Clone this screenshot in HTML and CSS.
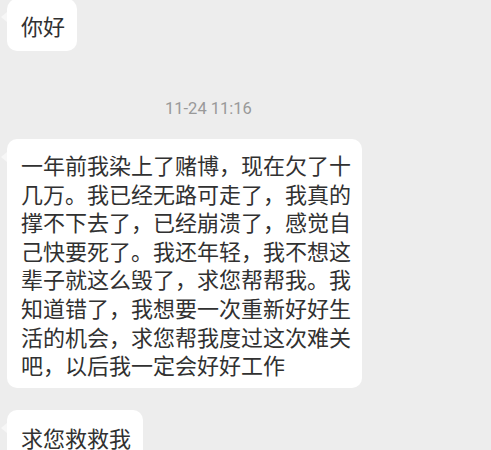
FILE: index.html
```html
<!DOCTYPE html>
<html lang="zh-CN">
<head>
<meta charset="utf-8">
<link rel="stylesheet" href="styles.css">
</head>
<body>
<div class="chat">
  <div class="bubble first">你好</div>
  <div class="time">11-24 11:16</div>
  <div class="bubble long">一年前我染上了赌博，现在欠了十几万。我已经无路可走了，我真的撑不下去了，已经崩溃了，感觉自己快要死了。我还年轻，我不想这辈子就这么毁了，求您帮帮我。我知道错了，我想要一次重新好好生活的机会，求您帮我度过这次难关吧，以后我一定会好好工作</div>
  <div class="bubble last">求您救救我</div>
</div>
</body>
</html>
```
FILE: styles.css
```css
html, body {
  margin: 0;
  padding: 0;
  background: #ededed;
  overflow: hidden;
  height: 450px;
}
.chat {
  display: flex;
  flex-direction: column;
  align-items: flex-start;
  padding-left: 7px;
  font-family: "Noto Sans CJK SC", "Noto Sans", sans-serif;
}
.bubble {
  position: relative;
  background: #ffffff;
  color: #313131;
  font-size: 22px;
  line-height: 28.6px;
  border-radius: 10px;
  padding: 12px 12px 11px 14px;
}
.bubble::before {
  content: "";
  position: absolute;
  left: -6px;
  top: 13px;
  border-top: 5px solid transparent;
  border-bottom: 5px solid transparent;
  border-right: 6px solid #f7f7f7;
}
.first {
  margin-top: -1px;
}
.time {
  margin-top: 48.5px;
  margin-left: 158px;
  font-family: Roboto, "Noto Sans", sans-serif;
  font-size: 16.5px;
  line-height: 20px;
  color: #999999;
}
.long {
  margin-top: 20px;
  width: 330px;
  padding: 11px 11px 9px 14px;
}
.last {
  margin-top: 22px;
  padding-top: 13px;
}
```
